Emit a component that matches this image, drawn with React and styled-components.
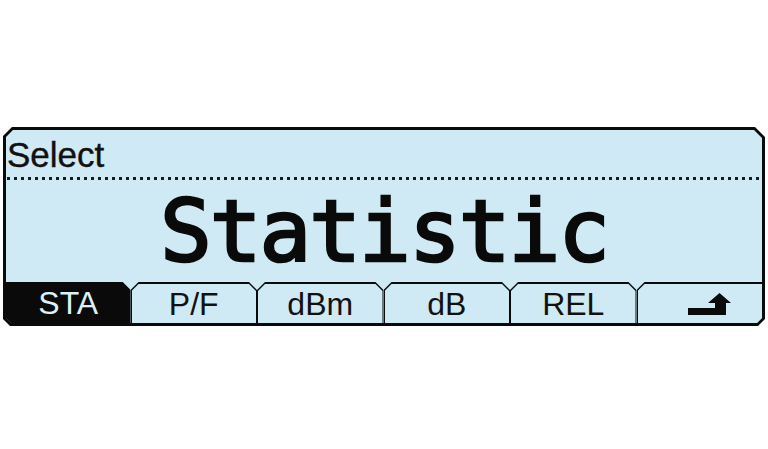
import React from 'react';
import styled, { createGlobalStyle } from 'styled-components';

const GlobalStyle = createGlobalStyle`
  html, body {
    margin: 0;
    padding: 0;
    background: #ffffff;
  }
`;

const Page = styled.div`
  width: 768px;
  height: 449px;
  padding: 127px 0 0 3px;
  box-sizing: border-box;
  background: #ffffff;
`;

const Frame = styled.div`
  width: 762px;
  height: 199px;
  padding: 3px;
  box-sizing: border-box;
  background: #0a0a0a;
  clip-path: polygon(9px 0, calc(100% - 10px) 0, 100% 10px, 100% calc(100% - 7px),
    calc(100% - 7px) 100%, 7px 100%, 0 calc(100% - 7px), 0 9px);
`;

const Screen = styled.div`
  height: 100%;
  display: flex;
  flex-direction: column;
  background: #cfeaf5;
  clip-path: polygon(7px 0, calc(100% - 8px) 0, 100% 8px, 100% calc(100% - 5px),
    calc(100% - 5px) 100%, 5px 100%, 0 calc(100% - 5px), 0 7px);
`;

const Header = styled.div`
  height: 47px;
  box-sizing: border-box;
  padding: 7px 0 0 1px;
  font-family: 'Liberation Sans', Arial, sans-serif;
  font-size: 35px;
  line-height: 1;
  color: #111111;
  -webkit-text-stroke: 0.4px #111111;
`;

const Dotted = styled.div`
  height: 3px;
  margin-left: 1px;
  background-image: repeating-linear-gradient(
    to right,
    #1a1a1a 0,
    #1a1a1a 3px,
    transparent 3px,
    transparent 7px
  );
`;

const Main = styled.div`
  height: 102px;
  display: flex;
  align-items: center;
  justify-content: center;
`;

const BigText = styled.span`
  font-family: 'DejaVu Sans Mono', monospace;
  font-weight: normal;
  font-size: 86px;
  line-height: 1;
  letter-spacing: -2px;
  color: #0a0a0a;
  -webkit-text-stroke: 2.6px #0a0a0a;
`;

const TabRow = styled.div`
  height: 41px;
  display: flex;
`;

const Tab = styled.div`
  flex: 1;
  display: flex;
  background: #0a0a0a;
  padding: ${({ $active, $first, $last }) =>
    $active ? '0' : `2px ${$last ? 0 : 1}px 0 ${$first ? 0 : 1}px`};
  clip-path: ${({ $first, $last }) =>
    `polygon(${$first ? '0 0' : '0 8px, 8px 0'}, ${
      $last ? '100% 0' : 'calc(100% - 8px) 0, 100% 8px'
    }, 100% 100%, 0 100%)`};
`;

const TabFace = styled.div`
  flex: 1;
  display: flex;
  align-items: center;
  justify-content: center;
  padding-left: ${({ $shift }) => $shift || 0}px;
  background: ${({ $active }) => ($active ? '#0a0a0a' : '#cfeaf5')};
  color: ${({ $active }) => ($active ? '#dcf0f9' : '#111111')};
  font-family: 'Liberation Sans', Arial, sans-serif;
  font-size: 32px;
  line-height: 1;
  clip-path: ${({ $first, $last }) =>
    `polygon(${$first ? '0 0' : '0 7px, 7px 0'}, ${
      $last ? '100% 0' : 'calc(100% - 7px) 0, 100% 7px'
    }, 100% 100%, 0 100%)`};
`;

const ReturnIcon = () => (
  <svg width="46" height="28" viewBox="0 0 46 28">
    <path d="M1 18 H28 V13 H21 L32.5 3 L44 13 H39 V25 H1 Z" fill="#0a0a0a" />
  </svg>
);

const tabs = [
  { label: 'STA', active: true },
  { label: 'P/F' },
  { label: 'dBm' },
  { label: 'dB' },
  { label: 'REL' },
  { icon: true }
];

const App = () => (
  <>
    <GlobalStyle />
    <Page>
      <Frame>
        <Screen>
          <Header>Select</Header>
          <Dotted />
          <Main>
            <BigText>Statistic</BigText>
          </Main>
          <TabRow>
            {tabs.map((tab, i) => {
              const first = i === 0;
              const last = i === tabs.length - 1;
              return (
                <Tab key={i} $active={tab.active} $first={first} $last={last}>
                  <TabFace
                    $active={tab.active}
                    $first={first}
                    $last={last}
                    $shift={tab.icon ? 20 : 0}
                  >
                    {tab.icon ? <ReturnIcon /> : tab.label}
                  </TabFace>
                </Tab>
              );
            })}
          </TabRow>
        </Screen>
      </Frame>
    </Page>
  </>
);

export default App;
